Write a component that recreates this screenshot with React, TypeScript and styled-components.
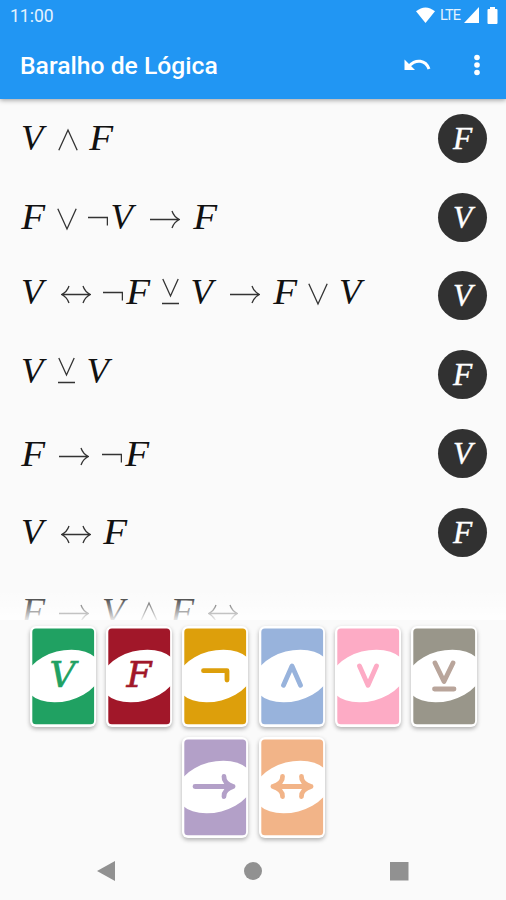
import React from 'react';
import styled, { createGlobalStyle } from 'styled-components';

const GlobalStyle = createGlobalStyle`
  * { box-sizing: border-box; }
  body { margin: 0; background: #fafafa; }
`;

type Value = 'V' | 'F';
type Symbol = Value | 'and' | 'or' | 'xor' | 'not' | 'then' | 'iff';

const Screen = styled.div`
  display: flex;
  flex-direction: column;
  width: 506px;
  height: 900px;
  overflow: hidden;
  background: #fafafa;
  font-family: Roboto, sans-serif;
`;

const Header = styled.header`
  flex: none;
  height: 99px;
  background: #2196f3;
  color: #fff;
  box-shadow: 0 1px 5px rgba(0, 0, 0, 0.4);
  z-index: 1;
`;

const StatusBar = styled.div`
  display: flex;
  align-items: center;
  justify-content: space-between;
  height: 32px;
  padding: 0 8px 0 10px;
`;

const Clock = styled.span`
  font-size: 17.5px;
  line-height: 20px;
  color: #e3f2fe;
`;

const StatusIcons = styled.div`
  display: flex;
  align-items: center;
  height: 20px;
  margin-top: -2px;
`;

const Network = styled.span`
  margin: 1px 3px 0 5px;
  width: 21px;
  font-size: 14.5px;
  letter-spacing: -0.9px;
  line-height: 20px;
  color: #e3f2fe;
`;

const Toolbar = styled.div`
  display: flex;
  align-items: center;
  height: 66px;
  padding: 0 24px 0 20px;
`;

const Title = styled.h1`
  flex: 1;
  margin: 1px 0 0;
  font-size: 24.7px;
  font-weight: 500;
  line-height: 30px;
`;

const Actions = styled.div`
  display: flex;
  align-items: center;
  gap: 41px;
`;

const History = styled.main`
  position: relative;
  flex: none;
  height: 521px;
  overflow: hidden;

  &::after {
    content: '';
    position: absolute;
    inset: auto 0 0;
    height: 30px;
    background: linear-gradient(rgba(255, 255, 255, 0), rgba(255, 255, 255, 0.9));
  }
`;

const Row = styled.div`
  display: flex;
  align-items: center;
  justify-content: space-between;
  height: 78.8px;
  padding: 0 19px 0 21px;
`;

const Formula = styled.div<{ $raised?: boolean }>`
  display: flex;
  height: 36px;
  margin-bottom: ${(p) => (p.$raised ? 8 : 0)}px;
`;

const Letter = styled.span<{ $value: Value }>`
  width: ${(p) => (p.$value === 'V' ? 27 : 26)}px;
  padding-left: ${(p) => (p.$value === 'V' ? 0 : 1)}px;
  font: italic 36.5px/36px 'Liberation Serif', serif;
  color: #111;
  white-space: nowrap;
  transform: scaleX(${(p) => (p.$value === 'V' ? 1 : 1.07)});
`;

const operatorSpacing = {
  and: '0 11px 0 9.5px',
  or: '0 11px 0 9.5px',
  xor: '0 12px 0 9.5px',
  not: '0 3px 0 0',
  then: '0 13px 0 12px',
  iff: '0 12.5px 0 12.5px',
};

const OperatorIcon = styled.svg<{ $kind: keyof typeof operatorSpacing }>`
  flex: none;
  margin: ${(p) => operatorSpacing[p.$kind]};
  fill: none;
  stroke: #333;
  stroke-width: 1.3;
`;

const Result = styled.div`
  display: flex;
  flex: none;
  align-items: center;
  justify-content: center;
  width: 49px;
  height: 49px;
  border-radius: 50%;
  background: #313131;
  color: #fff;
  font: italic 31.5px/49px 'Liberation Serif', serif;
  -webkit-text-stroke: 0.4px #fff;
`;

const Deck = styled.section`
  display: flex;
  flex: none;
  flex-wrap: wrap;
  align-content: flex-start;
  justify-content: center;
  gap: 10px 10.4px;
  height: 222px;
  padding: 5.5px 19.5px 0 20.5px;
`;

const Card = styled.button<{ $color: string }>`
  position: relative;
  width: 66px;
  height: 101px;
  padding: 0;
  overflow: hidden;
  border: none;
  border-radius: 6px;
  background: #fff;
  box-shadow: 0 2px 4px rgba(0, 0, 0, 0.3);
  color: ${(p) => p.$color};
`;

const CardArt = styled.svg`
  display: block;
`;

const CardLetter = styled.span`
  position: absolute;
  inset: 0;
  font: italic 36px/98px 'DejaVu Serif', serif;
  text-align: center;
  -webkit-text-stroke: 0.6px currentColor;
`;

const NavigationBar = styled.nav`
  display: flex;
  flex: 1;
  align-items: center;
  justify-content: space-between;
  padding: 0 97px;
`;

const drawings = {
  and: { width: 20, d: 'M.8 30.3L10 10l9.2 20.3' },
  or: { width: 20, d: 'M.8 9.7L10 30l9.2-20.3' },
  xor: { width: 17, d: 'M.8 5L8.5 22 16.2 5M0 29.5H17' },
  not: { width: 20, d: 'M0 18.5H19.4V26.5' },
  then: { width: 30, d: 'M0 20.5H29.5M22 12Q24 18 29.500 20.5Q24 23 22 29' },
  iff: {
    width: 30,
    d: 'M.5 20.5H29.5M22 12Q24 18 29.5 20.5Q24 23 22 29M8 12Q6 18 .5 20.5Q6 23 8 29',
  },
};

function Operator({ kind }: { kind: keyof typeof drawings }) {
  const { width, d } = drawings[kind];
  return (
    <OperatorIcon $kind={kind} width={width} height={36} viewBox={`0 0 ${width} 36`}>
      <path d={d} />
    </OperatorIcon>
  );
}

const cardMarks: Record<string, string> = {
  not: 'M21.5 44.7H45V54',
  and: 'M24.5 59.3L33 40 41.500 59.3',
  or: 'M24.5 40L33 59.3 41.500 40',
  xor: 'M24 37L33 55.5 42 37M23.5 63H43',
  then: 'M13 49.500H51M42 39.500Q41.500 46 51 49.500Q41.500 53 42 59.500',
  iff: 'M14 49.500H52M42.500 39.500Q42 46 52 49.500Q42 53 42.500 59.500M23.500 39.500Q24 46 14 49.500Q24 53 23.500 59.500',
};

function PlayingCard({ symbol, color, mark }: { symbol: Symbol; color: string; mark?: string }) {
  return (
    <Card $color={color} aria-label={symbol}>
      <CardArt width="66" height="101" viewBox="0 0 66 101">
        <rect x="2.3" y="2.6" width="61.8" height="95.6" rx="3.5" fill="currentColor" />
        <ellipse cx="33" cy="50" rx="39.1" ry="25.2" fill="#fff" transform="rotate(-14.6 33 50)" />
        {cardMarks[symbol] && (
          <path
            d={cardMarks[symbol]}
            fill="none"
            stroke={mark ?? color}
            strokeWidth="4.8"
            strokeLinecap="round"
            strokeLinejoin="round"
          />
        )}
      </CardArt>
      {(symbol === 'V' || symbol === 'F') && <CardLetter>{symbol}</CardLetter>}
    </Card>
  );
}

const history: { formula: Symbol[]; result?: Value }[] = [
  { formula: ['V', 'and', 'F'], result: 'F' },
  { formula: ['F', 'or', 'not', 'V', 'then', 'F'], result: 'V' },
  { formula: ['V', 'iff', 'not', 'F', 'xor', 'V', 'then', 'F', 'or', 'V'], result: 'V' },
  { formula: ['V', 'xor', 'V'], result: 'F' },
  { formula: ['F', 'then', 'not', 'F'], result: 'V' },
  { formula: ['V', 'iff', 'F'], result: 'F' },
  { formula: ['F', 'then', 'V', 'and', 'F', 'iff'] },
];

const deck: { symbol: Symbol; color: string; mark?: string }[] = [
  { symbol: 'V', color: '#20a162' },
  { symbol: 'F', color: '#a11729' },
  { symbol: 'not', color: '#dd9f0b' },
  { symbol: 'and', color: '#98b3dc' },
  { symbol: 'or', color: '#fdabc5' },
  { symbol: 'xor', color: '#99968a', mark: '#b9a59b' },
  { symbol: 'then', color: '#b3a0c8' },
  { symbol: 'iff', color: '#f2b488' },
];

export default function App() {
  return (
    <Screen>
      <GlobalStyle />
      <Header>
        <StatusBar>
          <Clock>11:00</Clock>
          <StatusIcons>
            <svg width="19" height="16" viewBox="0 0 19 16" fill="#fff">
              <path d="M0 4.3Q9.5-3.5 19 4.3L9.5 16z" />
            </svg>
            <Network>LTE</Network>
            <svg width="15" height="16" viewBox="0 0 15 16" fill="#fff">
              <path d="M15 0V16H0z" />
            </svg>
            <svg width="19" height="17" viewBox="0 0 19 17" fill="#fff">
              <path d="M11 0h5v2h1.5q1 0 1 1v13q0 1-1 1h-8q-1 0-1-1V3q0-1 1-1H11z" />
            </svg>
          </StatusIcons>
        </StatusBar>
        <Toolbar>
          <Title>Baralho de Lógica</Title>
          <Actions>
            <svg width="28" height="14" viewBox="0 0 28 14">
              <path d="M1.500 1.500V12H12z" fill="#fff" />
              <path d="M6 8C13 .8 22.500 1.800 26 11" fill="none" stroke="#fff" strokeWidth="3" />
            </svg>
            <svg width="10" height="22" viewBox="0 0 10 22" fill="#fff">
              <circle cx="5" cy="3.5" r="2.8" />
              <circle cx="5" cy="11" r="2.8" />
              <circle cx="5" cy="18.5" r="2.8" />
            </svg>
          </Actions>
        </Toolbar>
      </Header>
      <History>
        {history.map(({ formula, result }, index) => (
          <Row key={index}>
            <Formula $raised={formula.includes('xor')}>
              {formula.map((symbol, i) =>
                symbol === 'V' || symbol === 'F' ? (
                  <Letter key={i} $value={symbol}>{symbol}</Letter>
                ) : (
                  <Operator key={i} kind={symbol} />
                ),
              )}
            </Formula>
            {result && <Result>{result}</Result>}
          </Row>
        ))}
      </History>
      <Deck>
        {deck.map((card) => (
          <PlayingCard key={card.symbol} {...card} />
        ))}
      </Deck>
      <NavigationBar>
        <svg width="18" height="20" viewBox="0 0 18 20" fill="#919191">
          <path d="M18 0V20L0 10z" />
        </svg>
        <svg width="18" height="18" viewBox="0 0 18 18" fill="#919191">
          <circle cx="9" cy="9" r="9" />
        </svg>
        <svg width="19" height="19" viewBox="0 0 19 19" fill="#919191">
          <rect width="18.5" height="18.5" />
        </svg>
      </NavigationBar>
    </Screen>
  );
}
